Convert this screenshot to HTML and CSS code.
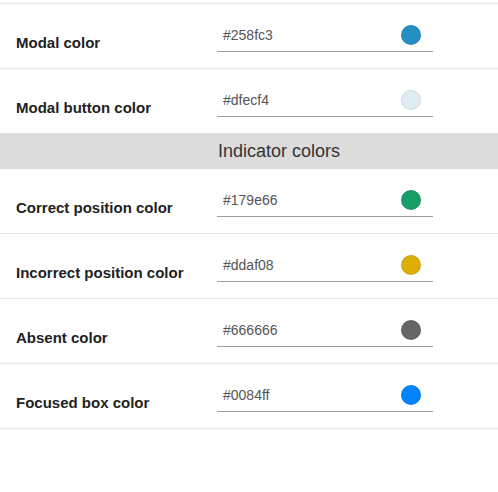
FILE: index.html
```html
<!DOCTYPE html>
<html lang="en">
  <head>
    <meta charset="UTF-8" />
    <meta name="viewport" content="width=device-width, initial-scale=1.0" />
    <title>Color settings</title>
    <link rel="stylesheet" href="styles.css">
  </head>
  <body>
    <div class="settings">
      <div class="row-end"></div>

      <div class="row">
        <label class="row-label">Modal color</label>
        <div class="field">
          <span class="field-value">#258fc3</span>
          <span class="swatch" style="background: #258fc3"></span>
        </div>
      </div>
      <div class="row">
        <label class="row-label">Modal button color</label>
        <div class="field">
          <span class="field-value">#dfecf4</span>
          <span class="swatch" style="background: #dfecf4"></span>
        </div>
      </div>

      <div class="section-title">Indicator colors</div>

      <div class="row">
        <label class="row-label">Correct position color</label>
        <div class="field">
          <span class="field-value">#179e66</span>
          <span class="swatch" style="background: #179e66"></span>
        </div>
      </div>
      <div class="row">
        <label class="row-label">Incorrect position color</label>
        <div class="field">
          <span class="field-value">#ddaf08</span>
          <span class="swatch" style="background: #ddaf08"></span>
        </div>
      </div>
      <div class="row">
        <label class="row-label">Absent color</label>
        <div class="field">
          <span class="field-value">#666666</span>
          <span class="swatch" style="background: #666666"></span>
        </div>
      </div>
      <div class="row">
        <label class="row-label">Focused box color</label>
        <div class="field">
          <span class="field-value">#0084ff</span>
          <span class="swatch" style="background: #0084ff"></span>
        </div>
      </div>
    </div>
  </body>
</html>
```

FILE: styles.css
```css
body {
  margin: 0;
  font-family: "Liberation Sans", Arial, sans-serif;
  background-color: #ffffff;
  color: #222;
}

.settings {
  width: 100%;
}

.row-end {
  height: 3px;
  border-bottom: 1px solid #e6e6e6;
}

.row {
  display: flex;
  align-items: center;
  height: 64px;
  border-bottom: 1px solid #e6e6e6;
}

.row-label {
  flex: 0 0 217px;
  padding-left: 16px;
  padding-top: 13px;
  box-sizing: border-box;
  font-size: 15px;
  font-weight: bold;
  color: #222;
}

.field {
  display: flex;
  align-items: center;
  justify-content: space-between;
  width: 216px;
  height: 32px;
  padding: 0 12px 1px 6px;
  box-sizing: border-box;
  border-bottom: 1px solid #a0a0a0;
}

.field-value {
  font-size: 14px;
  color: #555;
}

.swatch {
  width: 20px;
  height: 20px;
  border-radius: 50%;
  box-sizing: border-box;
  border: 1px solid rgba(0, 0, 0, 0.08);
}

.section-title {
  height: 36px;
  line-height: 36px;
  margin-top: -1px;
  padding-left: 60px;
  background-color: #dcdcdc;
  text-align: center;
  font-size: 18px;
  color: #333;
}
```
